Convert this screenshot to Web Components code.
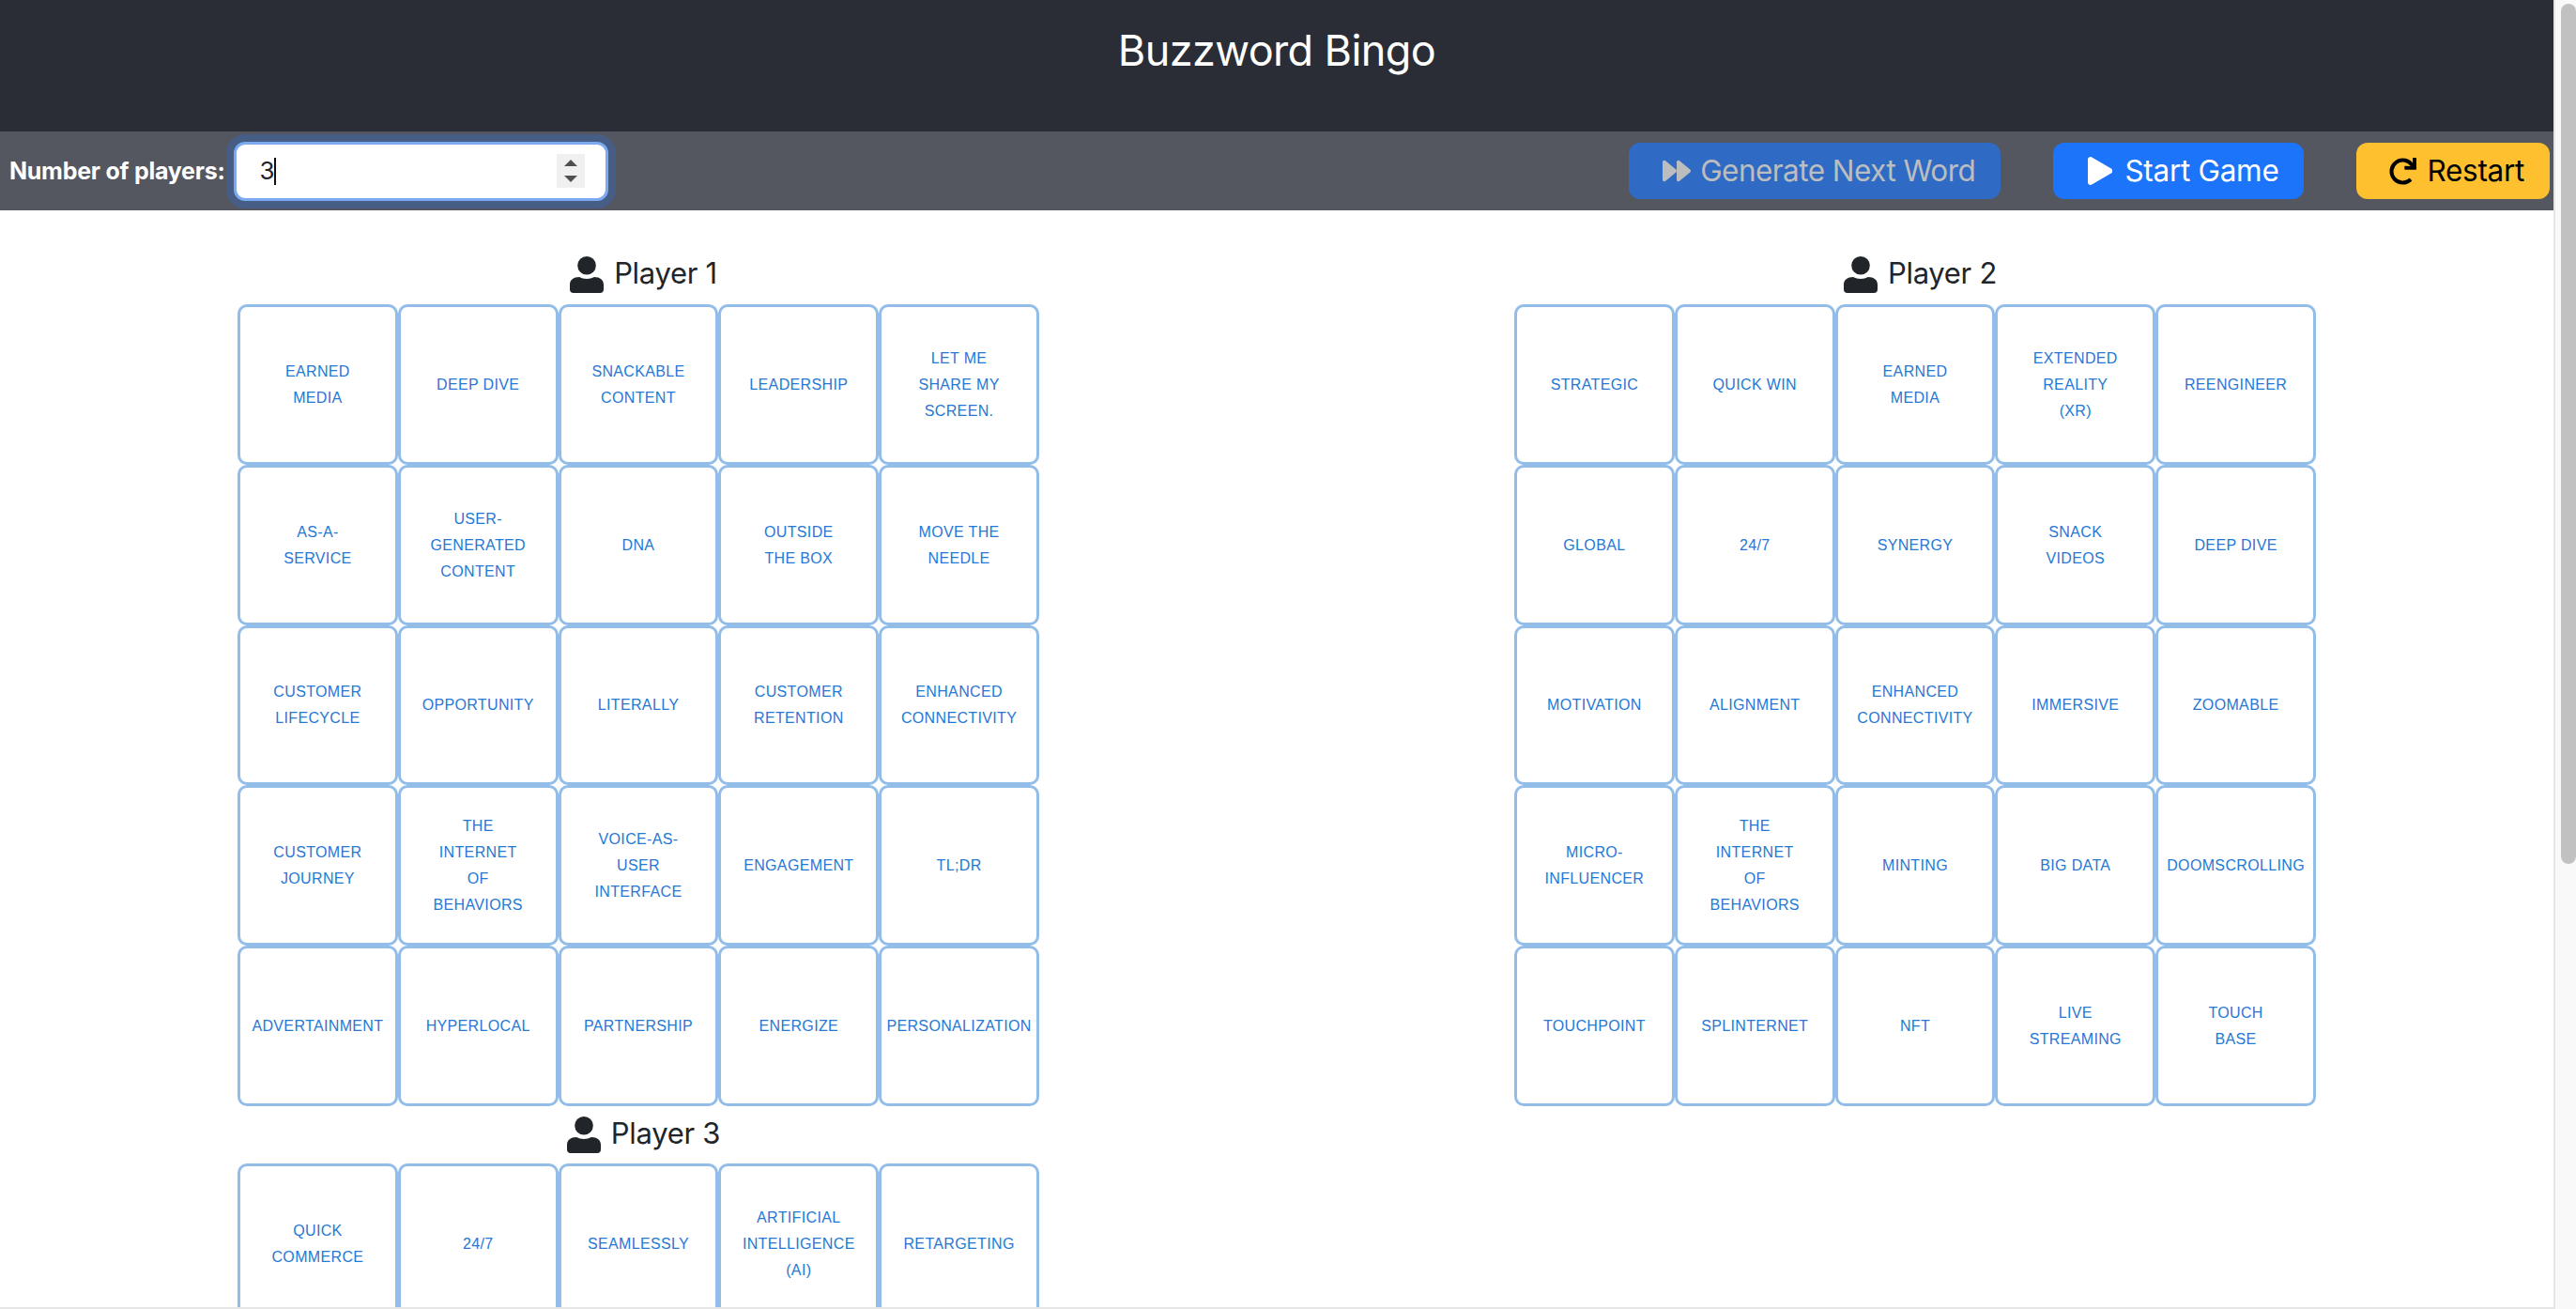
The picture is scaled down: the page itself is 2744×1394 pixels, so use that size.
<!DOCTYPE html>
<html>
<head>
<meta charset="utf-8">
<title>Buzzword Bingo</title>
<style>
  html, body { margin: 0; height: 100%; overflow: hidden; background: #fff; }
</style>
</head>
<body>
<bingo-app></bingo-app>

<script>
const ICONS = {
  forward: { box: "0 0 512 512", d: "M500.5 231.4l-192-160C287.9 54.3 256 68.6 256 96v320c0 27.4 31.9 41.8 52.5 24.6l192-160c15.3-12.8 15.3-36.4 0-49.2zm-256 0l-192-160C31.9 54.3 0 68.6 0 96v320c0 27.4 31.9 41.8 52.5 24.6l192-160c15.3-12.8 15.3-36.4 0-49.2z" },
  play: { box: "0 0 448 512", d: "M424.4 214.7L72.4 6.6C43.8-10.3 0 6.1 0 47.9V464c0 37.5 40.7 60.1 72.4 41.3l352-208c31.4-18.5 31.5-64.1 0-82.6z" },
  redo: { box: "0 0 512 512", d: "M500.33 0h-47.41a12 12 0 0 0-12 12.57l4 82.76A247.42 247.42 0 0 0 256 8C119.34 8 8.05 119.53 8 256.19 7.95 393.07 119.06 504 256 504a247.1 247.1 0 0 0 166.18-63.91 12 12 0 0 0 .48-17.43l-34-34a12 12 0 0 0-16.38-.55A176 176 0 1 1 402.1 157.8l-101.53-4.87a12 12 0 0 0-12.57 12v47.41a12 12 0 0 0 12 12h200.33a12 12 0 0 0 12-12V12a12 12 0 0 0-12-12z" }
};

class AppHeader extends HTMLElement {
  constructor() {
    super();
    this.attachShadow({ mode: "open" }).innerHTML = `
      <style>
        :host {
          display: flex;
          justify-content: center;
          height: 140px;
          padding-top: 26px;
          box-sizing: border-box;
          background: #2a2d35;
          color: #fff;
          font: 400 45px/56px Inter, "Liberation Sans", sans-serif;
          letter-spacing: -0.6px;
        }
      </style>
      <slot></slot>`;
  }
}

class NumberField extends HTMLElement {
  constructor() {
    super();
    this.attachShadow({ mode: "open" }).innerHTML = `
      <style>
        :host {
          display: flex;
          align-items: center;
          width: 399px;
          height: 63px;
          margin-left: 9px;
          padding: 0 22px 0 25px;
          box-sizing: border-box;
          background: #fff;
          border: 3px solid #7baaf0;
          border-radius: 12px;
          box-shadow: 0 0 0 8px #465e86;
          color: #212529;
          font: 400 26px/34px Inter, "Liberation Sans", sans-serif;
          letter-spacing: -2px;
        }
        .caret { width: 2px; height: 29px; margin-left: 1px; background: #111; }
        .spin {
          display: flex;
          flex-direction: column;
          justify-content: space-between;
          align-items: center;
          width: 30px;
          height: 36px;
          margin-left: auto;
          padding: 6px 0;
          box-sizing: border-box;
          background: #f0f0f0;
        }
        svg { display: block; width: 14px; height: 7px; fill: #505050; }
      </style>
      <slot></slot><span class="caret"></span>
      <div class="spin">
        <svg viewBox="0 0 14 7"><path d="M7 0l7 7H0z"/></svg>
        <svg viewBox="0 0 14 7"><path d="M0 0h14L7 7z"/></svg>
      </div>`;
  }
}

class ActionButton extends HTMLElement {
  constructor() {
    super();
    const icon = ICONS[this.getAttribute("icon")];
    this.attachShadow({ mode: "open" }).innerHTML = `
      <style>
        :host {
          display: flex;
          align-items: center;
          height: 60px;
          padding: 0 27px 0 var(--pad-left, 37px);
          box-sizing: border-box;
          gap: var(--icon-gap, 12px);
          border-radius: 12px;
          background: var(--bg);
          color: var(--fg);
          font: 400 31.5px/38px Inter, "Liberation Sans", sans-serif;
          letter-spacing: var(--track, -0.3px);
          white-space: nowrap;
        }
        svg { display: block; height: var(--icon-h, 30px); fill: currentColor; }
      </style>
      <svg viewBox="${icon.box}"><path d="${icon.d}"/></svg>
      <slot></slot>`;
  }
}

class TopToolbar extends HTMLElement {
  constructor() {
    super();
    this.attachShadow({ mode: "open" }).innerHTML = `
      <style>
        :host {
          display: flex;
          align-items: center;
          height: 84px;
          padding: 0 4px 0 10px;
          box-sizing: border-box;
          background: #54575f;
        }
        label { color: #fff; font: 700 25px/30px Inter, "Liberation Sans", sans-serif; letter-spacing: -0.25px; white-space: nowrap; }
        .actions { display: flex; gap: 56px; margin-left: auto; }
        .generate { --bg: #2f6bc4; --fg: #bcbdbf; --icon-h: 30px; --icon-gap: 10px; --track: -0.55px; --pad-left: 36px; }
        .start { --bg: #1c74fb; --fg: #fff; --icon-h: 30px; --icon-gap: 13px; --pad-left: 37px; }
        .restart { --bg: #ffc030; --fg: #000; --icon-h: 29px; --icon-gap: 11px; --pad-left: 35px; }
      </style>
      <label>Number of players:</label>
      <number-field>3</number-field>
      <div class="actions">
        <action-button class="generate" icon="forward">Generate Next Word</action-button>
        <action-button class="start" icon="play">Start Game</action-button>
        <action-button class="restart" icon="redo">Restart</action-button>
      </div>`;
  }
}

class BingoCell extends HTMLElement {
  constructor() {
    super();
    this.attachShadow({ mode: "open" }).innerHTML = `
      <style>
        :host {
          display: flex;
          align-items: center;
          justify-content: center;
          min-width: 0;
          height: 100%;
          padding-top: 1px;
          box-sizing: border-box;
          border: 3px solid #92bde8;
          border-radius: 10px;
          background: #fff;
          color: #2678d5;
          font: 400 16px/28px "Liberation Sans", Arial, sans-serif;
          letter-spacing: 0.35px;
          text-align: center;
          white-space: nowrap;
        }
      </style>
      <div><slot></slot></div>`;
  }
}

class PlayerBoard extends HTMLElement {
  constructor() {
    super();
    const name = this.getAttribute("name");
    const words = this.getAttribute("words").split(",");
    const cells = words.map(w => `<bingo-cell>${w.split("|").join("<br>")}</bingo-cell>`).join("");
    this.attachShadow({ mode: "open" }).innerHTML = `
      <style>
        :host { display: block; }
        .title {
          display: flex;
          align-items: center;
          justify-content: center;
          gap: 11px;
          height: 61.5px;
          padding-left: 11px;
          padding-bottom: 1px;
          box-sizing: border-box;
          color: #212529;
          font: 400 31px/38px Inter, "Liberation Sans", sans-serif;
          letter-spacing: -0.3px;
        }
        .title span { margin-bottom: 3px; }
        svg { display: block; width: 36px; height: 39px; fill: #212529; }
        .grid { display: grid; grid-template-columns: repeat(5, 170.8px); grid-auto-rows: 170.8px; justify-content: center; }
      </style>
      <div class="title">
        <svg viewBox="0 0 36 39">
          <circle cx="18" cy="9.8" r="9.8"/>
          <path d="M0 35v-5c0-5 4-8 10-8 2.5 1.3 5 2 8 2s5.500-.7 8-2c6 0 10 3 10 8v5a4 4 0 0 1-4 4H4a4 4 0 0 1-4-4z"/>
        </svg>
        <span>${name}</span>
      </div>
      <div class="grid">${cells}</div>`;
  }
}

class PageScrollbar extends HTMLElement {
  constructor() {
    super();
    this.attachShadow({ mode: "open" }).innerHTML = `
      <style>
        :host {
          display: block;
          padding: 4px 0 0 6px;
          box-sizing: border-box;
          background: #f9f9f9;
          border-left: 2px solid #e6e6e6;
        }
        .thumb { height: 916px; border-radius: 8px; background: #c1c1c1; }
      </style>
      <div class="thumb"></div>`;
  }
}

class BingoApp extends HTMLElement {
  constructor() {
    super();
    this.attachShadow({ mode: "open" }).innerHTML = `
      <style>
        :host {
          display: grid;
          grid-template-columns: 2720px 24px;
          height: 1394px;
          overflow: hidden;
        }
        .page { height: 1392px; border-bottom: 2px solid #e6e6e6; overflow: hidden; }
        .boards { display: grid; grid-template-columns: 1360px 1360px; padding-top: 38.5px; }
      </style>
      <div class="page">
        <app-header>Buzzword Bingo</app-header>
        <top-toolbar></top-toolbar>
        <div class="boards">
          <player-board name="Player 1" words="EARNED|MEDIA,DEEP DIVE,SNACKABLE|CONTENT,LEADERSHIP,LET ME|SHARE MY|SCREEN.,AS-A-|SERVICE,USER-|GENERATED|CONTENT,DNA,OUTSIDE|THE BOX,MOVE THE|NEEDLE,CUSTOMER|LIFECYCLE,OPPORTUNITY,LITERALLY,CUSTOMER|RETENTION,ENHANCED|CONNECTIVITY,CUSTOMER|JOURNEY,THE|INTERNET|OF|BEHAVIORS,VOICE-AS-|USER|INTERFACE,ENGAGEMENT,TL;DR,ADVERTAINMENT,HYPERLOCAL,PARTNERSHIP,ENERGIZE,PERSONALIZATION"></player-board>
          <player-board name="Player 2" words="STRATEGIC,QUICK WIN,EARNED|MEDIA,EXTENDED|REALITY|(XR),REENGINEER,GLOBAL,24/7,SYNERGY,SNACK|VIDEOS,DEEP DIVE,MOTIVATION,ALIGNMENT,ENHANCED|CONNECTIVITY,IMMERSIVE,ZOOMABLE,MICRO-|INFLUENCER,THE|INTERNET|OF|BEHAVIORS,MINTING,BIG DATA,DOOMSCROLLING,TOUCHPOINT,SPLINTERNET,NFT,LIVE|STREAMING,TOUCH|BASE"></player-board>
          <player-board name="Player 3" words="QUICK|COMMERCE,24/7,SEAMLESSLY,ARTIFICIAL|INTELLIGENCE|(AI),RETARGETING"></player-board>
        </div>
      </div>
      <page-scrollbar></page-scrollbar>`;
  }
}

customElements.define("app-header", AppHeader);
customElements.define("number-field", NumberField);
customElements.define("action-button", ActionButton);
customElements.define("top-toolbar", TopToolbar);
customElements.define("bingo-cell", BingoCell);
customElements.define("player-board", PlayerBoard);
customElements.define("page-scrollbar", PageScrollbar);
customElements.define("bingo-app", BingoApp);
</script>
</body>
</html>
